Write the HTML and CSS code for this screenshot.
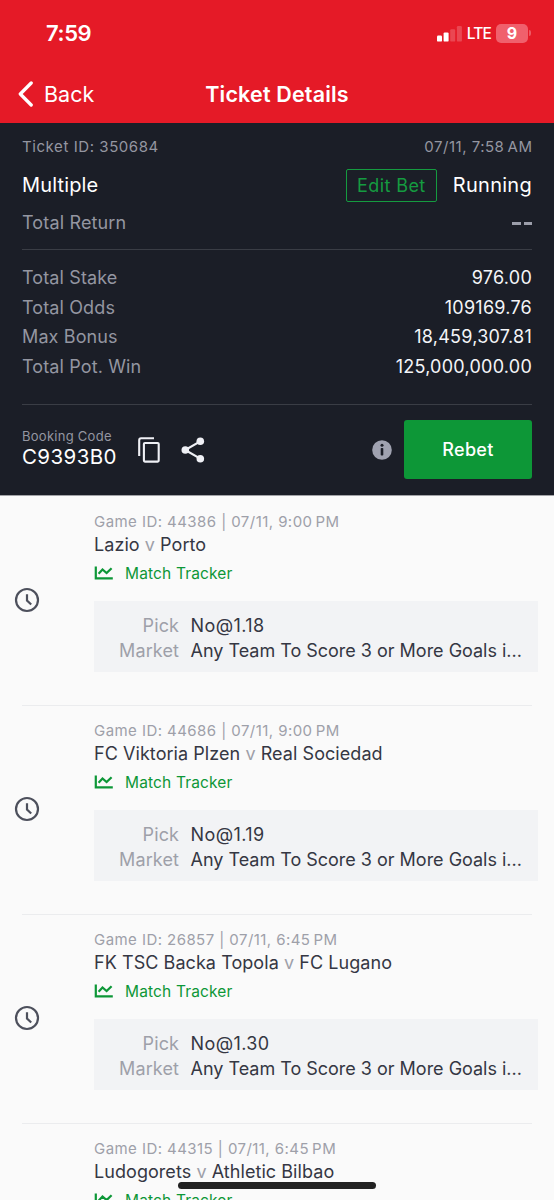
FILE: index.html
```html
<!DOCTYPE html>
<html lang="en">
<head>
<meta charset="utf-8">
<title>Ticket Details</title>
<link rel="stylesheet" href="styles.css">
</head>
<body>
<svg class="defs" width="0" height="0">
  <symbol id="clock" viewBox="0 0 26 26"><circle cx="13" cy="13" r="11" fill="none" stroke="#4d505c" stroke-width="2.2"/><path d="M13 7.2v6.3l4.2 4" fill="none" stroke="#4d505c" stroke-width="2.2"/></symbol>
  <symbol id="chart" viewBox="0 0 20 14"><path d="M1.8 .5v11.8h17M4.6 7.7 8.5 3.5l4.1 3.6 5-4.9" fill="none" stroke="#0d9737" stroke-width="2.2"/></symbol>
</svg>
<div class="screen">
  <header class="top">
    <div class="status">
      <span class="time">7:59</span>
      <div class="indicators">
        <svg class="signal" width="25" height="16" viewBox="0 0 25 16" fill="#fff"><rect y="9.6" width="5" height="6" rx="1.2"/><rect x="6.6" y="6.4" width="5" height="9.2" rx="1.2"/><rect x="13.2" y="3.3" width="5" height="12.3" rx="1.2" opacity=".2"/><rect x="19.9" width="5" height="15.6" rx="1.2" opacity=".2"/></svg>
        <span class="network">LTE</span>
        <span class="battery">9</span><span class="battery-tip"></span>
      </div>
    </div>
    <nav class="nav">
      <a class="back"><svg width="16" height="26" viewBox="0 0 16 26"><path d="M13.2 2 2.3 13l10.9 11" fill="none" stroke="#fff" stroke-width="3.3" stroke-linecap="round" stroke-linejoin="round"/></svg><span class="back-label">Back</span></a>
      <h1 class="title">Ticket Details</h1>
    </nav>
  </header>
  <section class="ticket">
    <div class="row meta"><span>Ticket ID: 350684</span><span class="date">07/11, 7:58&#8201;AM</span></div>
    <div class="row kind"><span class="multiple">Multiple</span><div class="state"><a class="edit">Edit Bet</a><span class="running">Running</span></div></div>
    <div class="row return"><span>Total Return</span><span class="dashes"><i></i><i></i></span></div>
    <div class="totals">
      <div class="row"><span>Total Stake</span><span class="value">976.00</span></div>
      <div class="row"><span>Total Odds</span><span class="value">109169.76</span></div>
      <div class="row"><span>Max Bonus</span><span class="value">18,459,307.81</span></div>
      <div class="row"><span>Total Pot. Win</span><span class="value">125,000,000.00</span></div>
    </div>
    <div class="booking">
      <div class="code"><span class="code-label">Booking Code</span><span class="code-value">C9393B0</span></div>
      <svg class="copy" width="22" height="26" viewBox="0 0 22 26" fill="none" stroke="#eff0f5" stroke-width="2.1"><path d="M1.2 19V3.2Q1.2 1.3 3.1 1.3H16"/><rect x="5.9" y="6" width="14.8" height="18.6" rx="1"/></svg>
      <svg class="share" width="24" height="26" viewBox="0 0 24 26"><path d="M19.2 4.4 4.2 13l15 8.6" fill="none" stroke="#eff0f5" stroke-width="2.2"/><g fill="#eff0f5"><circle cx="19.3" cy="4.3" r="3.8"/><circle cx="4.3" cy="13" r="3.8"/><circle cx="19.3" cy="21.7" r="3.8"/></g></svg>
      <svg class="info" width="20" height="20" viewBox="0 0 20 20"><circle cx="10" cy="10" r="9.8" fill="#a0a2b0"/><g fill="#1b1e27"><circle cx="10" cy="5.2" r="1.5"/><rect x="8.7" y="7.9" width="2.6" height="7.7" rx=".8"/></g></svg>
      <a class="rebet">Rebet</a>
    </div>
  </section>
  <main class="games">
    <article class="game">
      <svg class="clock"><use href="#clock"/></svg>
      <div class="info-col">
        <div class="game-id">Game ID: 44386 | 07/11, 9:00&#8201;PM</div>
        <div class="teams">Lazio <span class="versus">v</span> Porto</div>
        <div class="tracker"><svg class="chart"><use href="#chart"/></svg><span>Match Tracker</span></div>
        <dl class="bet"><dt>Pick</dt><dd class="pick">No@1.18</dd><dt>Market</dt><dd class="market">Any Team To Score 3 or More Goals i...</dd></dl>
      </div>
    </article>
    <article class="game">
      <svg class="clock"><use href="#clock"/></svg>
      <div class="info-col">
        <div class="game-id">Game ID: 44686 | 07/11, 9:00&#8201;PM</div>
        <div class="teams">FC Viktoria Plzen <span class="versus">v</span> Real Sociedad</div>
        <div class="tracker"><svg class="chart"><use href="#chart"/></svg><span>Match Tracker</span></div>
        <dl class="bet"><dt>Pick</dt><dd class="pick">No@1.19</dd><dt>Market</dt><dd class="market">Any Team To Score 3 or More Goals i...</dd></dl>
      </div>
    </article>
    <article class="game">
      <svg class="clock"><use href="#clock"/></svg>
      <div class="info-col">
        <div class="game-id">Game ID: 26857 | 07/11, 6:45&#8201;PM</div>
        <div class="teams">FK TSC Backa Topola <span class="versus">v</span> FC Lugano</div>
        <div class="tracker"><svg class="chart"><use href="#chart"/></svg><span>Match Tracker</span></div>
        <dl class="bet"><dt>Pick</dt><dd class="pick">No@1.30</dd><dt>Market</dt><dd class="market">Any Team To Score 3 or More Goals i...</dd></dl>
      </div>
    </article>
    <article class="game">
      <div class="info-col">
        <div class="game-id">Game ID: 44315 | 07/11, 6:45&#8201;PM</div>
        <div class="teams">Ludogorets <span class="versus">v</span> Athletic Bilbao</div>
        <div class="tracker"><svg class="chart"><use href="#chart"/></svg><span>Match Tracker</span></div>
      </div>
    </article>
  </main>
  <div class="home-bar"></div>
</div>
</body>
</html>
```
FILE: styles.css
```css
* { box-sizing: border-box; margin: 0; padding: 0; }
body { background: #fafafa; font-family: Inter, "Liberation Sans", sans-serif; }
.defs { display: block; }
.screen { position: relative; width: 554px; height: 1200px; overflow: hidden; background: #fafafa; }
svg { display: block; flex: none; }
span, a, h1, dd, dt { white-space: nowrap; }

.top { height: 123px; background: #e51a27; color: #fff; }
.status { height: 64px; padding: 2px 23px 0 46px; display: flex; justify-content: space-between; align-items: center; }
.time { font-size: 22px; font-weight: 600; letter-spacing: -.4px; }
.indicators { display: flex; align-items: center; }
.signal { margin-top: 2px; }
.network { margin: 0 5px 0 5px; font-size: 15.5px; font-weight: 500; letter-spacing: -.8px; }
.battery { width: 32px; height: 19px; border-radius: 5px; background: #f0606c; font-size: 16px; line-height: 19px; font-weight: 700; text-align: center; }
.battery-tip { width: 2px; height: 6px; margin-left: 1px; border-radius: 0 2px 2px 0; background: #ee5964; }
.nav { height: 59px; padding: 0 18px; display: grid; grid-template-columns: 1fr auto 1fr; align-items: center; }
.back { display: flex; align-items: center; gap: 10px; }
.back-label { font-size: 21.5px; }
.title { font-size: 21.5px; font-weight: 600; letter-spacing: .17px; }

.ticket { height: 373px; padding: 13px 22px 0; background: #1b1e27; color: #9496a1; border-bottom: 1px solid #a2a3a7; }
.row { display: flex; justify-content: space-between; align-items: center; }
.meta { height: 20px; font-size: 15px; letter-spacing: .57px; }
.date { letter-spacing: .5px; margin-right: -.5px; }
.kind { height: 34px; margin-top: 12px; color: #fff; font-size: 20px; letter-spacing: .15px; }
.state { display: flex; align-items: center; gap: 16px; }
.running { letter-spacing: .27px; }
.edit { width: 91px; height: 33px; border: 1px solid #159b40; border-radius: 2px; color: #159b40; font-size: 18px; line-height: 32px; text-align: center; letter-spacing: .4px; }
.return { height: 24px; margin-top: 8px; font-size: 18px; letter-spacing: .15px; }
.dashes { display: flex; gap: 3px; padding-top: 2px; }
.dashes i { width: 8.5px; height: 3px; background: #9c9eaa; }
.totals { margin-top: 15px; padding: 13px 0 22.5px; border: solid #3a3d45; border-width: 1px 0; font-size: 18px; letter-spacing: .12px; }
.totals .row { height: 29.5px; }
.value { color: #f4f5f8; letter-spacing: .25px; }
.booking { display: flex; align-items: center; height: 90px; }
.code { width: 116px; margin-top: -3px; display: flex; flex-direction: column; }
.code-label { font-size: 13px; line-height: 18px; letter-spacing: .27px; }
.code-value { color: #fff; font-size: 20.5px; line-height: 24px; letter-spacing: .4px; }
.share { margin-left: 20.5px; }
.info { margin-left: auto; }
.rebet { width: 128px; height: 59px; margin-left: 12px; border-radius: 3px; background: #0d9737; color: #fff; font-size: 18px; font-weight: 500; line-height: 59px; text-align: center; letter-spacing: .3px; }

.games { padding-top: 1px; }
.game { display: grid; grid-template-columns: 72px 444px; height: 209px; margin: 0 22px; border-bottom: 1px solid #ebecee; }
.info-col { grid-column: 2; grid-row: 1; padding-top: 15px; }
.clock { grid-column: 1; grid-row: 1; width: 26px; height: 26px; margin: 90px 0 0 -8px; }
.game-id { color: #9ea0a9; font-size: 15px; line-height: 20px; letter-spacing: .44px; white-space: nowrap; }
.teams { margin-top: 1px; color: #353743; font-size: 18px; line-height: 24px; letter-spacing: .06px; white-space: nowrap; }
.versus { color: #9ea0a9; }
.tracker { display: flex; align-items: center; gap: 11px; margin-top: 6px; height: 20px; color: #0d9737; font-size: 15.5px; letter-spacing: .15px; }
.chart { width: 20px; height: 14px; }
.bet { display: grid; grid-template-columns: 85px auto; column-gap: 11.5px; align-content: start; height: 71px; margin-top: 18px; padding-top: 11.5px; background: #f2f3f5; font-size: 18px; line-height: 25px; }
.bet dt { color: #9ea0a9; text-align: right; letter-spacing: .1px; }
.bet dd { color: #353743; }
.bet .market { letter-spacing: -.01px; }
.bet .pick { letter-spacing: .4px; }
.home-bar { position: absolute; left: 178px; top: 1182px; width: 198px; height: 7px; border-radius: 4px; background: #222; }
```
